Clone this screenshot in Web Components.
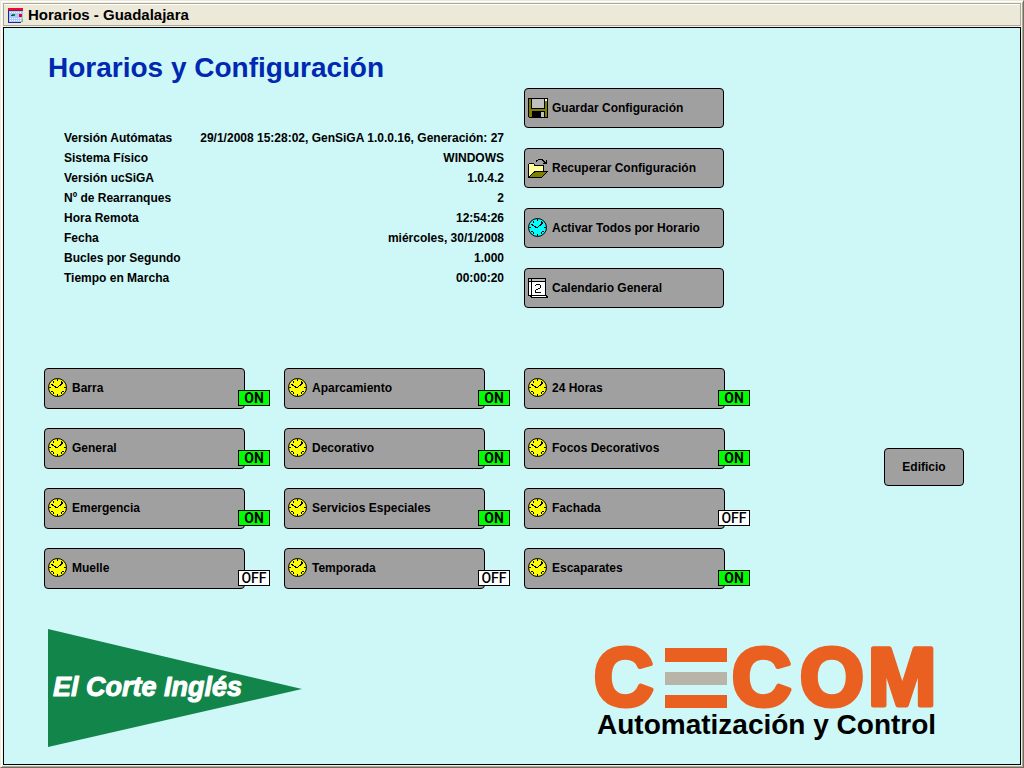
<!DOCTYPE html>
<html lang="es">
<head>
<meta charset="utf-8">
<title>Horarios - Guadalajara</title>
<style>
html,body{margin:0;height:100%}
body{font:bold 12px/20px "Liberation Sans",Arial,sans-serif;color:#000;background:#ece9d8}
</style>
</head>
<body>
<app-window caption="Horarios - Guadalajara">
  <schedule-panel></schedule-panel>
</app-window>
<script>
const ICONS = {
  clock: `<circle cx="9.5" cy="9.5" r="9" fill="var(--face,#ff0)" stroke="#000"/>
    <g stroke="#000" fill="none" shape-rendering="crispEdges"><path d="M9.5 1v2M9.5 16v2M1 9.5h2M16 9.5h2"/>
    <path d="M5 3l1 2M14 3l-1 2M3 14l2-1M14 16l-1-2M5 16l1-2M16 14l-2-1"/>
    <path d="M3 6l6 4M9 10l6-6M10 9l5-4"/></g>`,
  disk: `<g shape-rendering="crispEdges"><path fill="#000" d="M0 0h20v20H1v-1H0z"/><path fill="#808000" d="M1 1h2v10h14V3h2v16h-2v-6H4v6H1z"/>
    <path fill="#c0c0c0" d="M4 1h12v9H4z"/><path fill="#c0c0c0" d="M13 14h3v5h-3z"/><path fill="#fff" d="M17 1h2v2h-2z"/></g>`,
  folder: `<g shape-rendering="crispEdges"><path fill="#000" d="M0 6h1V5h5v1h1v1h9v6h4v1h-1v1h-1v1h-1v1h-1v1h-1v1h-1v1H0z"/>
    <path fill="#ffff9c" d="M1 6h5v2h9v5H6v1H5v1H4v1H3v1H2v1H1z"/>
    <path fill="#808000" d="M7 14h11v1h-1v1h-1v1h-1v1h-1v1H2v-1h1v-1h1v-1h1v-1h2z"/>
    <path fill="#000" d="M8 2h2V1h5v1h1v1h1v1h1V2h1v4h-4V5h1V4h-1V3h-1V2h-4v1H9v1H8z"/></g>`,
  calendar: `<g shape-rendering="crispEdges"><path fill="#000" d="M0 0h18v17h1v1h1v2H3v-1H2v-1H0z"/>
    <path fill="#c0c0c0" d="M1 1h2v2H1zM4 1h13v2H4z"/><path fill="#fff" d="M1 4h2v13H1zM4 4h13v13H4zM4 18h14v1H4z"/>
    <path fill="#000" d="M8 6h4v1H8zM7 7h1v1H7zM12 7h1v3h-1zM10 10h2v1h-2zM8 11h2v1H8zM7 12h1v2H7zM7 14h6v1H7z"/></g>`
};
const BUTTON_CSS = `
  button{display:flex;align-items:center;gap:4px;width:100%;height:var(--h,41px);margin:0;padding:0 3px var(--lift,2px);
    border:1px solid #000;border-radius:4px;background:#a0a0a0;color:#000;font:inherit;text-align:left}
  svg{display:block;flex:none;width:20px;height:20px}`;

customElements.define('app-window', class extends HTMLElement {
  constructor() {
    super();
    this.attachShadow({mode: 'open'}).innerHTML = `<style>
      :host{display:flex;flex-direction:column;box-sizing:border-box;min-height:100vh;padding:1px;
        background:#f4f2e8;border:1px solid;border-color:#ece9d8 #716f64 #716f64 #ece9d8;
        box-shadow:inset 1px 1px #fff,inset -1px -1px #aca899}
      header{display:flex;align-items:center;gap:4px;box-sizing:border-box;height:23px;margin:1px 1px 1px;padding:0 4px;
        background:#ece9d8;border:1px solid #aca899;box-shadow:inset 0 1px #fff;font-size:15px;font-weight:bold}
      svg{width:16px;height:16px}
      main{flex:1;display:flex;flex-direction:column;margin:0 1px 1px;border:1px solid #000;background:#cef7f7}
    </style>
    <header><svg viewBox="0 0 16 16" shape-rendering="crispEdges" aria-hidden="true">
      <path fill="#2020a0" d="M0 1h1v15H0zM0 15h13v1H0z"/><path fill="#a8c8f8" d="M1 3h14v12H1z"/>
      <path fill="#f03" d="M0 1h15v2H0z"/><path fill="#802040" d="M1 3h14v1H1z"/>
      <path stroke="#fff" stroke-dasharray="1 1" d="M2 5.500h12M2 11.500h12M2 13.500h12"/>
      <path fill="#084" d="M4 7h3v2H4z"/><path fill="#238" d="M3 8h2v1H3z"/><path fill="#d03" d="M11 7h3v3h-3z"/><path fill="#6c4" d="M14 12h1v3h-2v-1h1z"/>
    </svg><span></span></header><main><slot></slot></main>`;
    this.shadowRoot.querySelector('span').textContent = this.getAttribute('caption');
  }
});

customElements.define('action-button', class extends HTMLElement {
  constructor() {
    super();
    const icon = this.getAttribute('icon');
    this.attachShadow({mode: 'open'}).innerHTML = `<style>:host{display:block;--lift:0}${BUTTON_CSS}
      :host(:not([icon])) button{justify-content:center}</style>
      <button type="button">${icon ? `<svg viewBox="0 0 20 20" aria-hidden="true">${ICONS[icon]}</svg>` : ''}<slot></slot></button>`;
  }
});

customElements.define('zone-button', class extends HTMLElement {
  constructor() {
    super();
    const state = this.getAttribute('state');
    this.attachShadow({mode: 'open'}).innerHTML = `<style>:host{display:block;position:relative}${BUTTON_CSS}
      .badge{position:absolute;right:-25px;bottom:3px;box-sizing:border-box;width:32px;height:16px;border:1px solid #000;
        background:#fff;font:500 14px/15px Roboto,sans-serif;text-align:center}
      .ON{background:#0f0;font-weight:bold}</style>
      <button type="button"><svg viewBox="0 0 20 20" aria-hidden="true">${ICONS.clock}</svg><slot></slot></button>
      <span class="badge ${state}">${state}</span>`;
  }
});

customElements.define('system-info', class extends HTMLElement {
  constructor() {
    super();
    const rows = [
      ['Versión Autómatas', '29/1/2008 15:28:02, GenSiGA 1.0.0.16, Generación: 27'],
      ['Sistema Físico', 'WINDOWS'], ['Versión ucSiGA', '1.0.4.2'], ['Nº de Rearranques', '2'],
      ['Hora Remota', '12:54:26'], ['Fecha', 'miércoles, 30/1/2008'],
      ['Bucles por Segundo', '1.000'], ['Tiempo en Marcha', '00:00:20']];
    this.attachShadow({mode: 'open'}).innerHTML = `<style>
      :host{display:block}
      table{width:100%;border-collapse:collapse;font:inherit}
      th,td{padding:0;height:20px;text-align:left;white-space:nowrap}
      td{text-align:right}</style>
      <table>${rows.map(([k, v]) => `<tr><th scope="row">${k}</th><td>${v}</td></tr>`).join('')}</table>`;
  }
});

customElements.define('store-logo', class extends HTMLElement {
  constructor() {
    super();
    this.attachShadow({mode: 'open'}).innerHTML = `<style>:host{display:block}svg{display:block}
      text{font:italic bold 27px "Liberation Sans",sans-serif;fill:#fff;stroke:#fff;stroke-width:1px;stroke-linejoin:round}</style>
      <svg width="254" height="118" viewBox="0 0 254 118" role="img" aria-label="El Corte Inglés">
      <path fill="#12854b" d="M0 0L254 60L0 118z"/><text x="5" y="67">El Corte Inglés</text></svg>`;
  }
});

customElements.define('maker-logo', class extends HTMLElement {
  constructor() {
    super();
    this.attachShadow({mode: 'open'}).innerHTML = `<style>:host{display:block}svg{display:block;overflow:visible}
      text{font:bold 82px "Liberation Sans",sans-serif;fill:#e96020;stroke:#e96020;stroke-width:5px;stroke-linejoin:round}
      p{margin:0;padding-left:3px;font-size:28px;line-height:32px;white-space:nowrap}</style>
      <svg width="344" height="62" viewBox="0 0 344 62" role="img" aria-label="CECOM">
      <text x="0" y="58">C</text><path fill="#e96020" d="M71 1h62v14H71zM71 48h62v13H71z"/><path fill="#b8b4a8" d="M71 25h62v13H71z"/>
      <text x="138 206 274" y="58">COM</text></svg>
      <p>Automatización y Control</p>`;
  }
});

customElements.define('schedule-panel', class extends HTMLElement {
  constructor() {
    super();
    const zones = [['Barra', 'ON'], ['Aparcamiento', 'ON'], ['24 Horas', 'ON'],
      ['General', 'ON'], ['Decorativo', 'ON'], ['Focos Decorativos', 'ON'],
      ['Emergencia', 'ON'], ['Servicios Especiales', 'ON'], ['Fachada', 'OFF'],
      ['Muelle', 'OFF'], ['Temporada', 'OFF'], ['Escaparates', 'ON']];
    this.attachShadow({mode: 'open'}).innerHTML = `<style>
      :host{display:block;padding:20px 56px 16px 40px}
      h1{margin:0 0 0 4px;font-size:28px;line-height:40px;color:#0028b0}
      .top{display:flex}
      system-info{flex:0 1 440px;padding:40px 20px 0}
      .actions{flex:0 0 200px;display:grid;gap:20px;align-content:start;--h:40px}
      .middle{display:flex;justify-content:space-between;align-items:flex-start;margin-top:60px}
      .zones{flex:0 1 681px;display:grid;grid-template-columns:repeat(3,1fr);gap:19px 39px}
      .building{width:80px;margin-top:80px;--h:38px}
      .cyan{--face:#0ff}
      footer{display:flex;justify-content:space-between;align-items:flex-end;margin-top:40px;padding:0 26px 0 4px}
      maker-logo{padding-bottom:6px}
    </style>
    <h1>Horarios y Configuración</h1>
    <div class="top"><system-info></system-info>
      <div class="actions">
        <action-button icon="disk">Guardar Configuración</action-button>
        <action-button icon="folder">Recuperar Configuración</action-button>
        <action-button icon="clock" class="cyan">Activar Todos por Horario</action-button>
        <action-button icon="calendar">Calendario General</action-button>
      </div></div>
    <div class="middle">
      <div class="zones">${zones.map(([n, s]) => `<zone-button state="${s}">${n}</zone-button>`).join('')}</div>
      <action-button class="building">Edificio</action-button>
    </div>
    <footer><store-logo></store-logo><maker-logo></maker-logo></footer>`;
  }
});
</script>
</body>
</html>
